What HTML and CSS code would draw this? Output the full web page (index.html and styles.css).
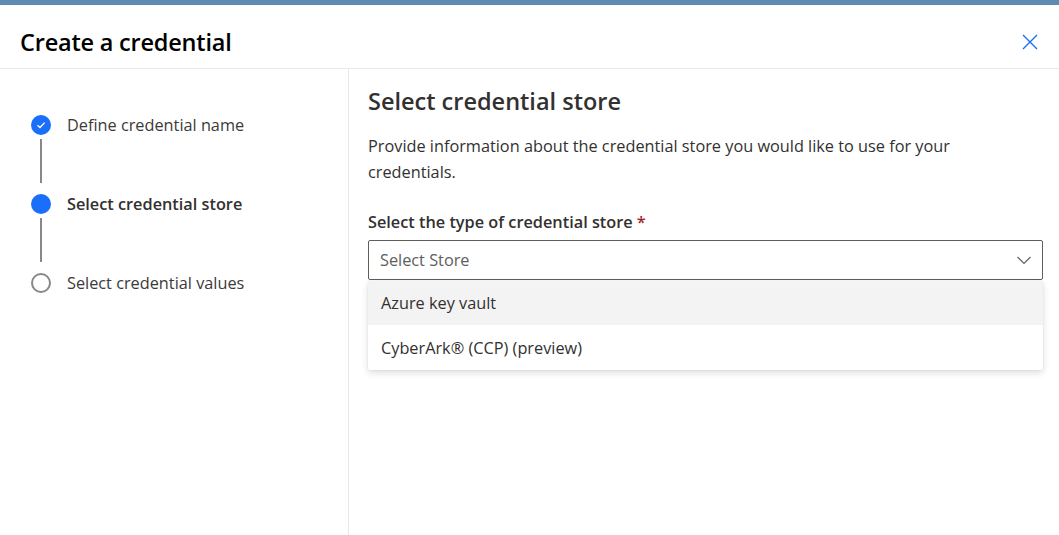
FILE: index.html
```html
<!DOCTYPE html>
<html lang="en">
<head>
<meta charset="utf-8">
<title>Create a credential</title>
<link rel="stylesheet" href="styles.css">
</head>
<body>
<div class="topbar"></div>
<div class="dialog">
  <header class="header">
    <h1 class="title">Create a credential</h1>
    <button class="close" aria-label="Close">
      <svg width="16" height="16" viewBox="0 0 16 16"><path d="M1 1 L15 15 M15 1 L1 15" stroke="#1a6ff0" stroke-width="1.4" fill="none"/></svg>
    </button>
  </header>
  <div class="body">
    <nav class="steps">
      <div class="step">
        <div class="marker">
          <span class="dot done">
            <svg width="12" height="12" viewBox="0 0 12 12"><path d="M2.5 6.2 L5 8.5 L9.6 3.6" stroke="#fff" stroke-width="1.3" fill="none"/></svg>
          </span>
          <span class="line"></span>
        </div>
        <span class="label">Define credential name</span>
      </div>
      <div class="step">
        <div class="marker">
          <span class="dot current"></span>
          <span class="line"></span>
        </div>
        <span class="label bold">Select credential store</span>
      </div>
      <div class="step">
        <div class="marker">
          <span class="dot todo"></span>
        </div>
        <span class="label">Select credential values</span>
      </div>
    </nav>
    <main class="content">
      <h2 class="section-title">Select credential store</h2>
      <p class="desc">Provide information about the credential store you would like to use for your credentials.</p>
      <div class="field-label">Select the type of credential store <span class="req">*</span></div>
      <div class="dropdown-wrap">
        <div class="dropdown">
          <span class="placeholder">Select Store</span>
          <svg class="chev" width="16" height="16" viewBox="0 0 16 16"><path d="M1.5 5 L8 11.5 L14.5 5" stroke="#605e5c" stroke-width="1.1" fill="none"/></svg>
        </div>
        <ul class="menu">
          <li class="opt hover">Azure key vault</li>
          <li class="opt">CyberArk® (CCP) (preview)</li>
        </ul>
      </div>
    </main>
  </div>
</div>
</body>
</html>
```
FILE: styles.css
```css
* { box-sizing: border-box; }
html, body { margin: 0; padding: 0; }
body {
  width: 1059px;
  height: 535px;
  overflow: hidden;
  background: #fff;
  font-family: "Segoe UI", "Open Sans", "Noto Sans", sans-serif;
  color: #323130;
}
.topbar { height: 5px; background: #5f8bb0; }
.dialog { display: flex; flex-direction: column; height: 530px; }
.header {
  height: 64px;
  display: flex;
  align-items: center;
  justify-content: space-between;
  padding: 10px 20px 0 20px;
  border-bottom: 1px solid #e8e8e8;
}
.title {
  margin: 0;
  font-size: 23.5px;
  font-weight: 600;
  color: #000;
  letter-spacing: -0.2px;
}
.close {
  border: 0;
  background: none;
  padding: 0;
  width: 16px;
  height: 16px;
  margin-right: 1px;
  display: flex;
}
.body { flex: 1; display: flex; }
.steps {
  width: 350px;
  border-right: 1px solid #e8e8e8;
  padding: 46px 0 0 31px;
}
.step { display: flex; gap: 16px; }
.marker { display: flex; flex-direction: column; align-items: center; width: 20px; }
.dot {
  width: 20px; height: 20px; border-radius: 50%;
  display: flex; align-items: center; justify-content: center;
  flex: none;
}
.dot.done, .dot.current { background: #1a6ffa; }
.dot.todo { border: 2px solid #8a8886; }
.line { width: 2px; height: 44px; background: #8a8886; margin: 4px 0 11px; }
.label { font-size: 16.3px; color: #3b3a39; line-height: 20px; margin-top: 0; }
.label.bold { font-weight: 600; color: #323130; }
.content { flex: 1; padding: 19px 16px 0 19px; }
.section-title { margin: 0; font-size: 23.5px; font-weight: 600; color: #323130; line-height: 26px; }
.desc { margin: 19px 0 0; font-size: 16.3px; line-height: 26px; color: #323130; padding-right: 60px; }
.field-label { margin-top: 27px; font-size: 16.3px; font-weight: 600; line-height: 20px; color: #323130; }
.req { color: #a4262c; }
.dropdown-wrap { margin-top: 8px; width: 675px; }
.dropdown {
  height: 40px;
  border: 1px solid #605e5c;
  border-radius: 2px;
  display: flex;
  align-items: center;
  justify-content: space-between;
  padding: 0 10px 0 11px;
}
.placeholder { font-size: 16.3px; color: #605e5c; }
.menu {
  list-style: none;
  margin: 1px 0 0;
  padding: 0;
  background: #fff;
  border-radius: 2px;
  box-shadow: 0 3px 7px rgba(0,0,0,0.13), 0 0 2px rgba(0,0,0,0.1);
}
.opt { height: 45px; display: flex; align-items: center; padding-left: 13px; font-size: 16.3px; color: #323130; }
.opt.hover { background: #f3f3f3; height: 44px; }
```
